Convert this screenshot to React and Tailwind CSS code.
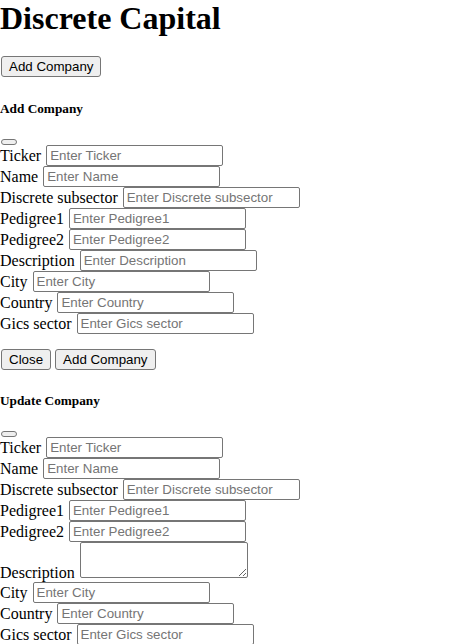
import React from "react";

const fields = [
  { label: "Ticker" },
  { label: "Name" },
  { label: "Discrete subsector" },
  { label: "Pedigree1" },
  { label: "Pedigree2" },
  { label: "Description" },
  { label: "City" },
  { label: "Country" },
  { label: "Gics sector" },
];

const btn =
  "h-[21px] px-[7px] bg-[#efefef] border border-[#767676] rounded-[3px] text-[13.33px] leading-[15px] text-black font-['Liberation_Sans',Arial,sans-serif]";

const inputCls =
  "w-[177px] h-[21px] pl-[3px] pr-[2px] bg-white border border-[#767676] rounded-[2px] text-[13.33px] text-black font-['Liberation_Sans',Arial,sans-serif] placeholder:text-[#757575] outline-none";

function FieldRow({ label, textarea }) {
  if (textarea) {
    return (
      <div className="flex items-end gap-[5px] h-[40px]">
        <label className="leading-[18px]">{label}</label>
        <textarea
          className="w-[168px] h-[36px] mb-[4px] bg-white border border-[#767676] rounded-[2px] text-[13.33px] font-['Liberation_Sans',Arial,sans-serif] outline-none"
          rows={2}
        />
      </div>
    );
  }
  return (
    <div className="flex items-center gap-[5px] h-[21px]">
      <label className="leading-[18px] pt-[1px]">{label}</label>
      <input className={inputCls} placeholder={`Enter ${label}`} />
    </div>
  );
}

function CompanyForm({ title, update }) {
  return (
    <div>
      <h5 className="text-[13.28px] font-bold leading-[15px] mt-[23px] mb-[23px]">
        {title}
      </h5>
      <button className="block w-[16px] h-[6px] ml-[1px] bg-[#efefef] border border-[#767676] rounded-[3px]" />
      <div>
        {fields.map((f) => (
          <FieldRow
            key={f.label}
            label={f.label}
            textarea={update && f.label === "Description"}
          />
        ))}
      </div>
      {!update && (
        <div className="flex gap-[4px] mt-[15px] ml-[1px]">
          <button className={btn}>Close</button>
          <button className={btn}>Add Company</button>
        </div>
      )}
    </div>
  );
}

export default function App() {
  return (
    <div className="bg-white text-black text-[16px] font-['Liberation_Serif','Times_New_Roman',serif] min-h-screen">
      <h1 className="text-[32px] font-bold leading-[37px] mb-[17px]">
        Discrete Capital
      </h1>
      <div className="ml-[1px]">
        <button className={btn}>Add Company</button>
      </div>
      <CompanyForm title="Add Company" />
      <CompanyForm title="Update Company" update />
    </div>
  );
}
